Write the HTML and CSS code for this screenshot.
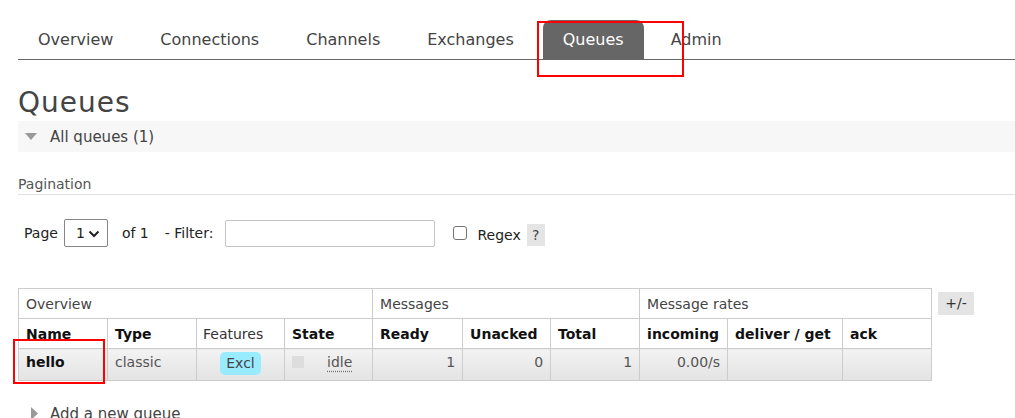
FILE: index.html
```html
<!DOCTYPE html>
<html lang="en">
<head>
<meta charset="utf-8">
<title>RabbitMQ Management - Queues</title>
<link rel="stylesheet" href="styles.css">
</head>
<body>
<div class="page">
  <nav class="tabs">
    <a class="tab" href="#">Overview</a>
    <a class="tab" href="#">Connections</a>
    <a class="tab" href="#">Channels</a>
    <a class="tab" href="#">Exchanges</a>
    <a class="tab active" href="#">Queues</a>
    <a class="tab" href="#">Admin</a>
  </nav>

  <h1 class="title">Queues</h1>

  <div class="section-bar">
    <svg class="tri-down" width="12" height="7" viewBox="0 0 12 7"><polygon points="0,0 12,0 6,7" fill="#999"/></svg>
    <span class="section-label">All queues (1)</span>
  </div>

  <h3 class="subhead">Pagination</h3>

  <div class="pager">
    <span class="lbl">Page</span>
    <span class="select-wrap">
      <select class="select"><option>1</option></select>
      <svg class="chev" width="12" height="8" viewBox="0 0 12 8"><polyline points="1.5,1.5 6,6 10.5,1.5" fill="none" stroke="#222" stroke-width="2"/></svg>
    </span>
    <span class="lbl of">of 1</span>
    <span class="lbl filter">- Filter:</span>
    <input class="filter-input" type="text">
    <input class="check" type="checkbox">
    <span class="lbl regex">Regex</span>
    <span class="help">?</span>
  </div>

  <div class="table-row">
    <table class="list">
      <colgroup>
        <col class="c89"><col class="c89"><col class="c88"><col class="c88"><col class="c90">
        <col class="c88"><col class="c89"><col class="c88"><col class="c115"><col class="c89">
      </colgroup>
      <tr class="group">
        <th colspan="4">Overview</th>
        <th colspan="3">Messages</th>
        <th colspan="3">Message rates</th>
      </tr>
      <tr class="heads">
        <th>Name</th>
        <th>Type</th>
        <th class="light">Features</th>
        <th>State</th>
        <th>Ready</th>
        <th>Unacked</th>
        <th>Total</th>
        <th>incoming</th>
        <th>deliver / get</th>
        <th>ack</th>
      </tr>
      <tr class="data">
        <td class="name">hello</td>
        <td class="muted">classic</td>
        <td class="center"><span class="badge">Excl</span></td>
        <td><span class="state"><span class="dot"></span><abbr class="idle">idle</abbr></span></td>
        <td class="num">1</td>
        <td class="num">0</td>
        <td class="num">1</td>
        <td class="num">0.00/s</td>
        <td></td>
        <td></td>
      </tr>
    </table>
    <span class="toggle">+/-</span>
  </div>

  <div class="section-bar plain">
    <svg class="tri-right" width="7" height="13" viewBox="0 0 7 13"><polygon points="0,0 7,6.5 0,13" fill="#999"/></svg>
    <span class="section-label">Add a new queue</span>
  </div>

  <div class="mark mark-tab"></div>
  <div class="mark mark-name"></div>
</div>
</body>
</html>
```

FILE: styles.css
```css
html, body {
  margin: 0;
  padding: 0;
  overflow: hidden;
  background: #fff;
}

body {
  font-family: "DejaVu Sans", Verdana, sans-serif;
  color: #444;
}

.page {
  position: relative;
  padding: 20px 0 0 18px;
}

.tabs {
  display: flex;
  gap: 7px;
  border-bottom: 1px solid #666;
}

.tab {
  display: block;
  padding: 0 20px;
  line-height: 39px;
  font-size: 16px;
  color: #444;
  text-decoration: none;
}

.tab.active {
  margin-left: 2px;
  background: #666;
  color: #fff;
  border-radius: 8px 8px 0 0;
}

.title {
  margin: 28px 0 3px;
  font-size: 28px;
  line-height: 30px;
  font-weight: normal;
  letter-spacing: 1px;
  color: #444;
}

.section-bar {
  display: flex;
  align-items: center;
  height: 31px;
  background: #f7f7f7;
}

.section-bar.plain {
  background: transparent;
  margin-top: 17px;
}

.tri-down {
  margin-left: 7px;
  margin-right: 13px;
}

.tri-right {
  margin-left: 13px;
  margin-right: 12px;
}

.section-label {
  font-size: 15px;
  color: #444;
}

.subhead {
  margin: 23px 0 0;
  padding-bottom: 1px;
  font-size: 14px;
  line-height: 18px;
  font-weight: normal;
  color: #555;
  border-bottom: 1px solid #e2e2e2;
}

.pager {
  display: flex;
  align-items: center;
  margin-top: 24px;
  padding-left: 6px;
  height: 28px;
  font-size: 14px;
  color: #222;
}

.lbl {
  font-size: 14px;
  color: #222;
}

.select-wrap {
  position: relative;
  margin-left: 6px;
  width: 44px;
  height: 28px;
}

.select {
  appearance: none;
  -webkit-appearance: none;
  box-sizing: border-box;
  width: 44px;
  height: 28px;
  padding: 0 0 0 11px;
  border: 1px solid #858585;
  border-radius: 2px;
  background: #fff;
  font-family: "DejaVu Sans", sans-serif;
  font-size: 14px;
  color: #222;
}

.chev {
  position: absolute;
  right: 8px;
  top: 11px;
  pointer-events: none;
}

.of {
  margin-left: 14px;
}

.filter {
  margin-left: 16px;
}

.filter-input {
  box-sizing: border-box;
  margin: 0 0 0 12px;
  width: 210px;
  height: 27px;
  border: 1px solid #c4c4c4;
  border-radius: 2px;
  background: #fff;
}

.check {
  appearance: none;
  -webkit-appearance: none;
  box-sizing: border-box;
  margin: 0 0 0 18px;
  width: 14px;
  height: 14px;
  border: 1px solid #767676;
  border-radius: 3px;
  background: #fff;
}

.regex {
  margin-left: 10px;
  margin-top: 3px;
}

.help {
  margin-left: 6px;
  margin-top: 3px;
  width: 18px;
  height: 22px;
  line-height: 22px;
  text-align: center;
  background: #e4e4e4;
  color: #444;
  font-size: 14px;
}

.table-row {
  display: flex;
  align-items: flex-start;
  gap: 6px;
  margin-top: 41px;
}

.list {
  border-collapse: collapse;
  table-layout: fixed;
  width: 914px;
  font-size: 14px;
}

.c88 { width: 88px; }
.c89 { width: 89px; }
.c90 { width: 90px; }
.c115 { width: 115px; }

.list th,
.list td {
  border: 1px solid #ccc;
  padding: 0 7px;
  text-align: left;
  white-space: nowrap;
  overflow: hidden;
}

.group th {
  height: 29px;
  font-weight: normal;
  color: #444;
}

.heads th {
  height: 29px;
  font-weight: bold;
  color: #111;
}

.heads th.light {
  font-weight: normal;
  color: #333;
  padding-left: 6px;
}

.list .data td {
  height: 26px;
  padding-bottom: 5px;
  background: linear-gradient(#f3f3f3, #e3e3e3);
  color: #555;
}

.list .data td.name {
  font-weight: bold;
  color: #111;
}

.list .data td.center {
  text-align: center;
  padding-bottom: 3px;
}

.list .data td.num {
  text-align: right;
}

.badge {
  display: inline-block;
  padding: 0 6px;
  line-height: 23px;
  border-radius: 5px;
  background: #99ebff;
  color: #444;
}

.state {
  display: flex;
  align-items: center;
}

.dot {
  display: inline-block;
  width: 12px;
  height: 12px;
  background: #ddd;
  margin-right: 23px;
}

.idle {
  text-decoration: underline dotted #777;
  text-underline-offset: 4px;
  color: #555;
}

.toggle {
  margin-top: 4px;
  width: 36px;
  height: 23px;
  line-height: 23px;
  text-align: center;
  background: #e4e4e4;
  color: #333;
  font-size: 14px;
}

.mark {
  position: absolute;
  border: 2px solid #f00;
  box-sizing: border-box;
}

.mark-tab {
  left: 537px;
  top: 21px;
  width: 147px;
  height: 56px;
}

.mark-name {
  left: 13px;
  top: 339px;
  width: 92px;
  height: 45px;
}
```
